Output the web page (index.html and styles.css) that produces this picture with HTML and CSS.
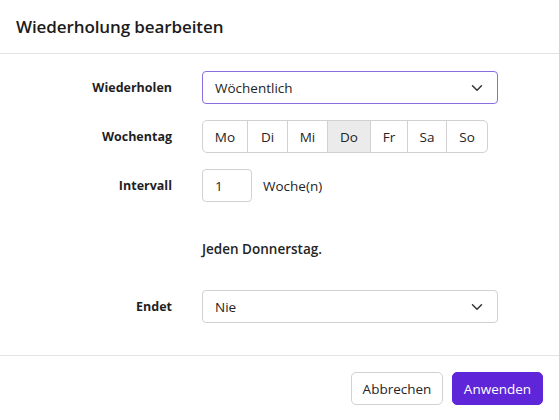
FILE: index.html
```html
<!DOCTYPE html>
<html lang="de">
<head>
<meta charset="utf-8">
<link rel="stylesheet" href="styles.css">
</head>
<body>
<div class="dialog">
  <div class="header"><h1 class="title">Wiederholung bearbeiten</h1></div>
  <div class="body">
    <div class="row">
      <label class="label">Wiederholen</label>
      <div class="select active">
        <span>Wöchentlich</span>
        <svg class="chev" width="12" height="8" viewBox="0 0 12 8"><path d="M1.5 1.8 L6 6.2 L10.5 1.8" fill="none" stroke="#333" stroke-width="1.5" stroke-linecap="round" stroke-linejoin="round"/></svg>
      </div>
    </div>
    <div class="row">
      <label class="label">Wochentag</label>
      <div class="days">
        <span class="day d-mo">Mo</span><span class="day d-di">Di</span><span class="day d-mi">Mi</span><span class="day d-do on">Do</span><span class="day d-fr">Fr</span><span class="day d-sa">Sa</span><span class="day d-so">So</span>
      </div>
    </div>
    <div class="row">
      <label class="label">Intervall</label>
      <div class="interval">
        <div class="num">1</div>
        <span class="unit">Woche(n)</span>
      </div>
    </div>
    <div class="row summary-row">
      <span></span>
      <div class="summary">Jeden Donnerstag.</div>
    </div>
    <div class="row">
      <label class="label">Endet</label>
      <div class="select">
        <span>Nie</span>
        <svg class="chev" width="12" height="8" viewBox="0 0 12 8"><path d="M1.5 1.8 L6 6.2 L10.5 1.8" fill="none" stroke="#333" stroke-width="1.5" stroke-linecap="round" stroke-linejoin="round"/></svg>
      </div>
    </div>
  </div>
  <div class="footer">
    <button class="btn secondary">Abbrechen</button>
    <button class="btn primary">Anwenden</button>
  </div>
</div>
</body>
</html>
```
FILE: styles.css
```css
* { box-sizing: border-box; }
html, body { margin: 0; padding: 0; background: #fff; }
body {
  font-family: "Open Sans", "Noto Sans", "Liberation Sans", sans-serif;
  color: #242424;
  font-size: 13.5px;
}
.dialog { width: 559px; height: 420px; display: flex; flex-direction: column; }
.header {
  height: 54px;
  border-bottom: 1px solid #e3e3e3;
  display: flex;
  align-items: center;
  padding: 0 16px;
}
.title { margin: 0; font-size: 17px; font-weight: 600; color: #1c1c1c; letter-spacing: -0.1px; }
.body {
  padding: 17px 0 32px 0;
  display: flex;
  flex-direction: column;
  gap: 16px;
  border-bottom: 1px solid #e3e3e3;
}
.row {
  display: grid;
  grid-template-columns: 172px 1fr;
  column-gap: 30px;
  align-items: center;
}
.label { text-align: right; font-weight: 700; font-size: 12.5px; color: #1f1f1f; }
.select {
  width: 296px;
  height: 33px;
  border: 1px solid #d1d1d1;
  border-radius: 4px;
  display: flex;
  align-items: center;
  justify-content: space-between;
  padding: 0 14px 0 12px;
}
.select.active { border-color: #8c6ce0; }
.chev { display: block; }
.days {
  display: flex;
  width: 286px;
  height: 33px;
  border: 1px solid #d1d1d1;
  border-radius: 5px;
  overflow: hidden;
}
.day {
  display: flex;
  align-items: center;
  justify-content: center;
  border-right: 1px solid #d1d1d1;
}
.day:last-child { border-right: 0; }
.d-mo { width: 45px; }
.d-di { width: 40px; }
.d-mi { width: 40px; }
.d-do { width: 43px; }
.d-fr { width: 37px; }
.d-sa { width: 39px; }
.d-so { flex: 1; }
.day.on { background: #ebebeb; }
.interval { display: flex; align-items: center; gap: 11px; }
.num {
  width: 50px;
  height: 33px;
  border: 1px solid #d1d1d1;
  border-radius: 4px;
  display: flex;
  align-items: center;
  padding-left: 12px;
}
.summary-row { height: 56px; }
.summary { font-weight: 600; font-size: 13.5px; padding-top: 6px; }
.footer {
  display: flex;
  justify-content: flex-end;
  gap: 9px;
  padding: 16px 16px 0 0;
}
.btn {
  height: 33px;
  font-family: inherit;
  font-size: 13.5px;
  border-radius: 5px;
  padding: 0 8px;
  cursor: pointer;
}
.secondary { background: #fff; border: 1px solid #d1d1d1; color: #242424; width: 92px; }
.primary { background: #5f26d9; border: 1px solid #5f26d9; color: #fff; width: 91px; }
```
